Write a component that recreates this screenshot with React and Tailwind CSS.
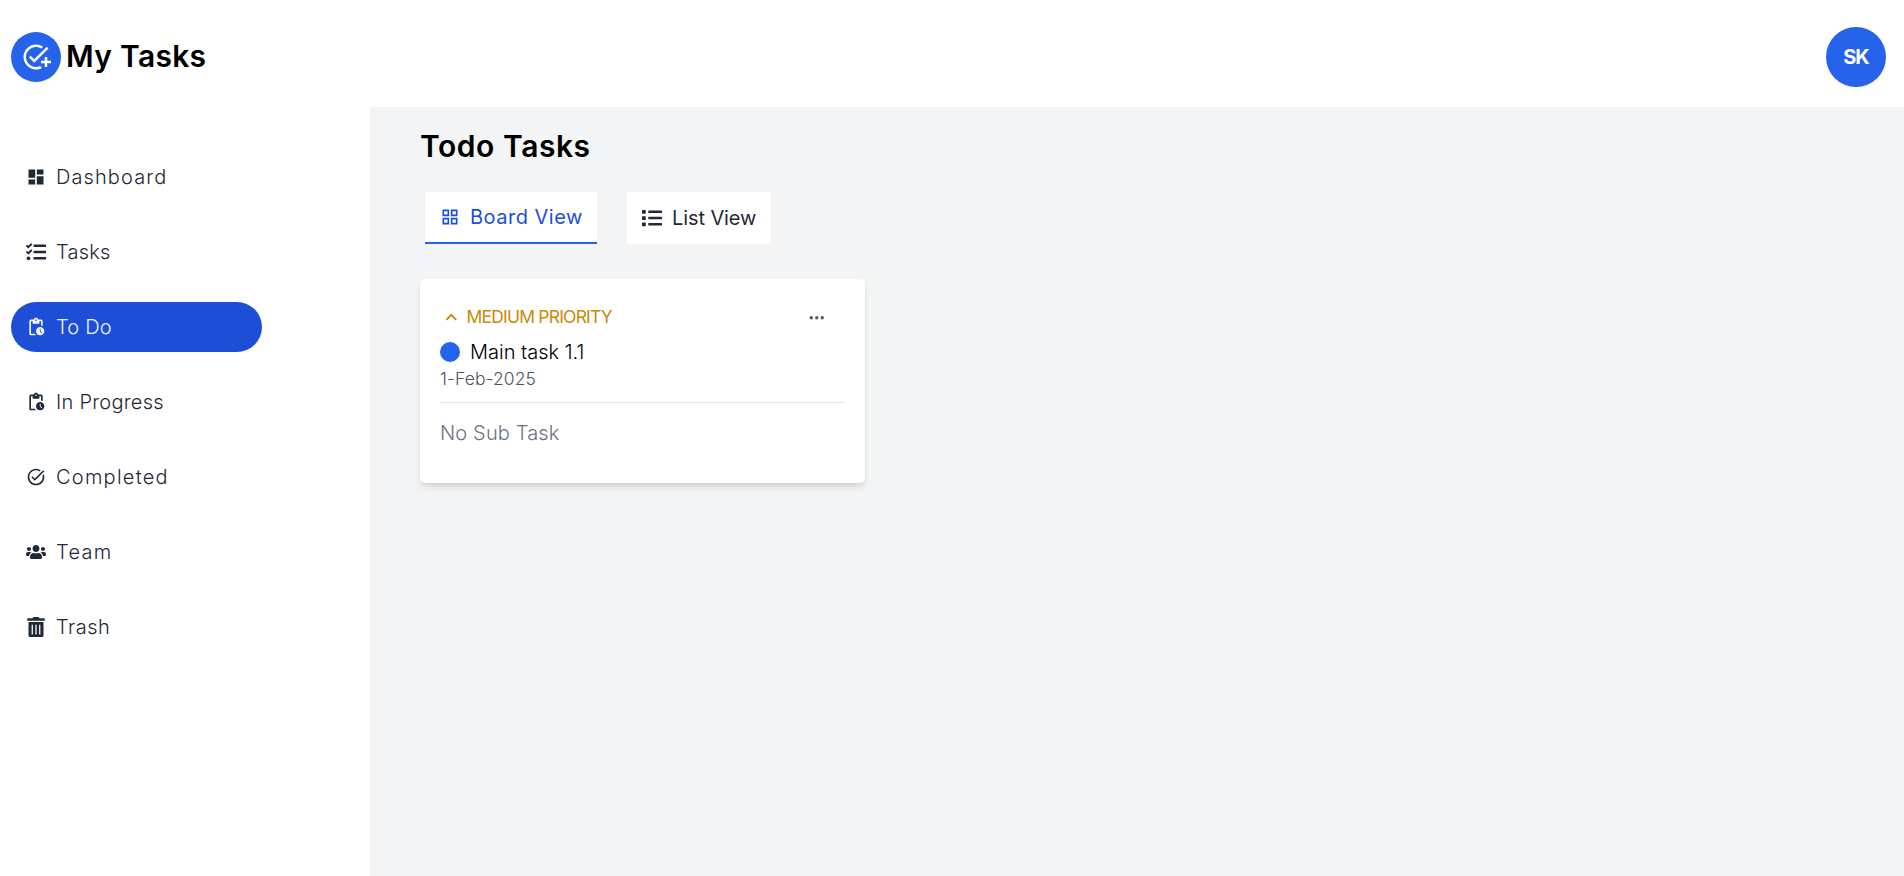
import { MdOutlineAddTask, MdDashboard, MdOutlinePendingActions, MdTaskAlt, MdGridView, MdKeyboardArrowUp } from "react-icons/md";
import { FaTasks, FaUsers, FaTrashAlt, FaList } from "react-icons/fa";
import { BsThreeDots } from "react-icons/bs";

const links = [
  { label: "Dashboard", Icon: MdDashboard, spacing: "tracking-[1.1px]" },
  { label: "Tasks", Icon: FaTasks, spacing: "tracking-[0.2px]" },
  { label: "To Do", Icon: MdOutlinePendingActions, spacing: "tracking-[0.2px]", active: true },
  { label: "In Progress", Icon: MdOutlinePendingActions, spacing: "tracking-[0.25px]" },
  { label: "Completed", Icon: MdTaskAlt, spacing: "tracking-[1.25px]" },
  { label: "Team", Icon: FaUsers, spacing: "tracking-[1.3px]" },
  { label: "Trash", Icon: FaTrashAlt, spacing: "tracking-[0.5px]" },
];

function Header() {
  return (
    <header className="flex h-[107px] shrink-0 items-center justify-between bg-white pt-[7px] pr-[18px] pl-[11px]">
      <div className="flex items-center gap-[5px]">
        <div className="flex size-[50px] items-center justify-center rounded-full bg-[#2563eb] text-white">
          <MdOutlineAddTask size={30} />
        </div>
        <h1 className="mb-[2px] text-[30px] leading-[40px] font-semibold tracking-[0.3px] whitespace-nowrap text-black"><span>My Tasks</span></h1>
      </div>
      <div className="flex size-[60px] items-center justify-center rounded-full bg-[#2563eb] text-[20px] font-bold tracking-[-1px] text-white">
        <span>SK</span>
      </div>
    </header>
  );
}

function Sidebar() {
  return (
    <nav className="flex w-[370px] shrink-0 flex-col gap-[25px] bg-white pt-[45px] pl-[11px]">
      {links.map(({ label, Icon, spacing, active }) => (
        <a
          key={label}
          className={`flex h-[50px] w-[251px] items-center gap-[10px] rounded-full px-[15px] text-[20px] font-light ${active ? "bg-[#1d4ed8] text-[#f3f4f6]" : "text-[#1f2937]"}`}
        >
          <Icon size={20} />
          <span className={spacing}>{label}</span>
        </a>
      ))}
    </nav>
  );
}

function TaskCard() {
  return (
    <article className="flex h-[204px] w-[445px] flex-col rounded-[5px] bg-white px-5 pt-[23px] shadow-[0_5px_7px_-1px_rgb(0_0_0/0.1),0_2px_5px_-2px_rgb(0_0_0/0.1)]">
      <div className="flex h-[30px] items-center justify-between pr-5">
        <div className="flex items-center gap-[4px] text-[17.5px] text-[#ca8a04]">
          <MdKeyboardArrowUp size={22.5} className="shrink-0" />
          <span className="mb-[2px] leading-[25px] tracking-[-0.8px]">MEDIUM PRIORITY</span>
        </div>
        <BsThreeDots size={17.5} className="mt-[2px] text-[#4b5563]" />
      </div>
      <div className="mt-[5px] flex h-[30px] items-center gap-[10px]">
        <div className="size-5 rounded-full bg-[#2563eb]" />
        <h4 className="text-[20px] font-light text-black"><span>Main task 1.1</span></h4>
      </div>
      <div className="h-[25px] text-[17.5px] leading-[24px] font-light tracking-[0.1px] text-[#4b5563]"><span>1-Feb-2025</span></div>
      <div className="mt-[10px] border-t border-[#e5e7eb] pt-[15px] text-[20px] leading-[30px] font-light tracking-[0.15px] text-[#6b7280]">
        <span>No Sub Task</span>
      </div>
    </article>
  );
}

export default function App() {
  return (
    <div className="flex h-[876px] w-full flex-col overflow-hidden bg-[#f3f4f6] font-[Inter,sans-serif]">
      <Header />
      <div className="flex grow">
        <Sidebar />
        <main className="grow pt-[19px] pl-[50px]">
          <h2 className="text-[30px] leading-[40px] font-semibold tracking-[0.55px] text-black"><span>Todo Tasks</span></h2>
          <div className="mt-[26px] flex gap-[30px] pl-[5px] text-[20px]">
            <button className="flex h-[52px] w-[172px] items-center gap-[10px] border-b-2 border-[#2563eb] bg-white pl-[15px] text-[#1d4ed8]">
              <MdGridView size={20} className="shrink-0" />
              <span className="tracking-[0.5px] whitespace-nowrap">Board View</span>
            </button>
            <button className="flex h-[52px] w-[144px] items-center gap-[10px] bg-white pl-[15px] text-[#1f2937]">
              <FaList size={20} className="shrink-0" />
              <span className="tracking-[-0.1px] whitespace-nowrap">List View</span>
            </button>
          </div>
          <div className="mt-[35px]">
            <TaskCard />
          </div>
        </main>
      </div>
    </div>
  );
}
